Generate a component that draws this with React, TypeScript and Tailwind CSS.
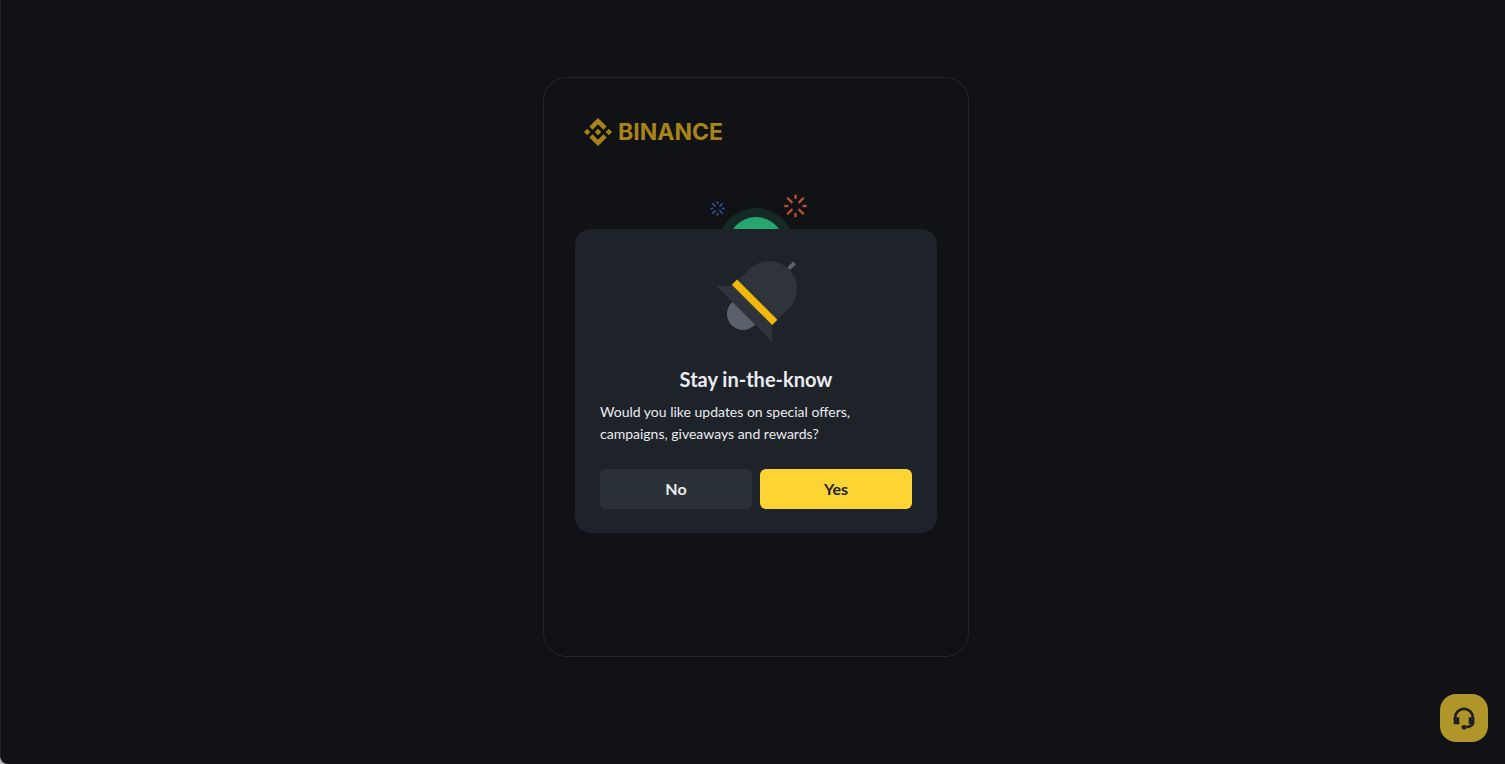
import type { ReactNode } from "react";

const RAY_ANGLES = [0, 45, 90, 135, 180, 225, 270, 315];

function BinanceMark() {
  return (
    <svg viewBox="0 0 126.61 126.61" className="size-7" fill="currentColor" aria-hidden="true">
      <path d="M38.73 53.2l24.59-24.58 24.6 24.6 14.3-14.31L63.32 0 24.43 38.9z" />
      <path d="M0 63.31L14.3 49l14.31 14.31-14.31 14.3z" />
      <path d="M38.73 73.41l24.59 24.59 24.6-24.6 14.31 14.29-38.91 38.92-38.89-38.88-.02-.02z" />
      <path d="M98 63.31L112.3 49l14.31 14.3-14.31 14.32z" />
      <path d="M77.83 63.3L63.32 48.78 48.79 63.3l14.53 14.53L77.83 63.32z" />
    </svg>
  );
}

function Spark({ cx, cy, r, color, width }: { cx: number; cy: number; r: number; color: string; width: number }) {
  return (
    <g stroke={color} strokeWidth={width}>
      {RAY_ANGLES.map((angle) => {
        // diagonal rays are longer than the straight ones
        const diagonal = angle % 90 !== 0;
        return (
          <line
            key={angle}
            x1={cx + r * (diagonal ? 0.4 : 0.64)}
            y1={cy}
            x2={cx + r * (diagonal ? 1.06 : 1.02)}
            y2={cy}
            transform={`rotate(${angle} ${cx} ${cy})`}
          />
        );
      })}
    </g>
  );
}

function SuccessIllustration() {
  return (
    <svg viewBox="0 0 96 96" className="size-24" aria-hidden="true">
      <circle cx="48" cy="52" r="38" fill="#152a26" />
      <circle cx="48" cy="51" r="28" fill="#27a66f" />
      <path d="M36 52l9 9 16-17" fill="none" stroke="#111216" strokeWidth="5" />
      <Spark cx={9.5} cy={14.5} r={7} color="#2a57ad" width={1.6} />
      <Spark cx={87.5} cy={12} r={11} color="#b9502f" width={2.4} />
    </svg>
  );
}

function BellIllustration() {
  return (
    <svg viewBox="0 0 96 96" className="size-24" aria-hidden="true">
      <circle cx="35" cy="61" r="16" fill="#5b616b" />
      <path d="M8 32.7h17l39 39v17z" fill="#2f343b" />
      <path d="M26 31L41.2 16.2a28 28 0 0 1 39.6 39.6L66 70z" fill="#2f343b" />
      <path d="M23.8 31.7l5.2-5.2 40.4 40.3-5.2 5.2z" fill="#f0b90b" />
      <path d="M79.3 14.3l6-5.8 2.8 2.8-6 5.8z" fill="#5b616b" />
    </svg>
  );
}

function HeadsetIcon() {
  return (
    <svg viewBox="0 0 24 24" className="size-6" fill="none" stroke="#1e2026" aria-hidden="true">
      <path d="M3.1 14v-2.2a8.9 8.9 0 0 1 17.8 0V17c0 2.6-2.6 3.6-6.4 4" strokeWidth="2.6" />
      <path d="M1.7 11.2h5.6v7H1.7zM16.7 11.2h5.6v7h-5.6z" fill="#1e2026" stroke="none" />
      <ellipse cx="12.2" cy="21.3" rx="2.6" ry="2.3" fill="#1e2026" stroke="none" />
    </svg>
  );
}

function ModalButton({ className, children }: { className: string; children: ReactNode }) {
  return (
    <button type="button" className={`h-10 flex-1 rounded-md text-base font-bold ${className}`}>
      {children}
    </button>
  );
}

export default function App() {
  return (
    <div className="bg-[#b5b5b5] font-['Lato','Liberation_Sans',sans-serif]">
      <main className="flex min-h-screen items-center justify-center rounded-bl-lg border-l border-[#1f2124] bg-[#111216] pb-[30px] pl-1.5">
        <section className="min-h-[580px] w-full max-w-[426px] rounded-3xl border border-[#24262b] p-10">
          <a href="/" className="flex items-center gap-1.5 text-[#a88317]">
            <BinanceMark />
            <span className="font-['Inter','Liberation_Sans',sans-serif] text-[23px] leading-7 font-bold">BINANCE</span>
          </a>
          <div className="mt-12 flex justify-center [&>svg]:overflow-visible">
            <SuccessIllustration />
          </div>
        </section>
      </main>

      <div className="fixed inset-0 flex items-center justify-center pb-0.5 pl-[7px]">
        <div
          role="dialog"
          aria-modal="true"
          aria-labelledby="updates-title"
          className="w-full max-w-[362px] rounded-2xl bg-[#1e2329] px-[25px] py-6 text-[#eaecef]"
        >
          <div className="flex justify-center">
            <BellIllustration />
          </div>
          <h2 id="updates-title" className="mt-4 text-center text-xl font-bold">
            Stay in-the-know
          </h2>
          <p className="mt-2 text-sm leading-[22px]">
            Would you like updates on special offers, campaigns, giveaways and rewards?
          </p>
          <div className="mt-6 flex gap-2">
            <ModalButton className="bg-[#2b3139] text-[#eaecef]">No</ModalButton>
            <ModalButton className="bg-[#fcd535] text-[#1e2329]">Yes</ModalButton>
          </div>
        </div>
      </div>

      <button
        type="button"
        aria-label="Support"
        className="fixed right-[17px] bottom-[22px] flex size-12 items-center justify-center rounded-2xl bg-[#b0952a]"
      >
        <HeadsetIcon />
      </button>
    </div>
  );
}
